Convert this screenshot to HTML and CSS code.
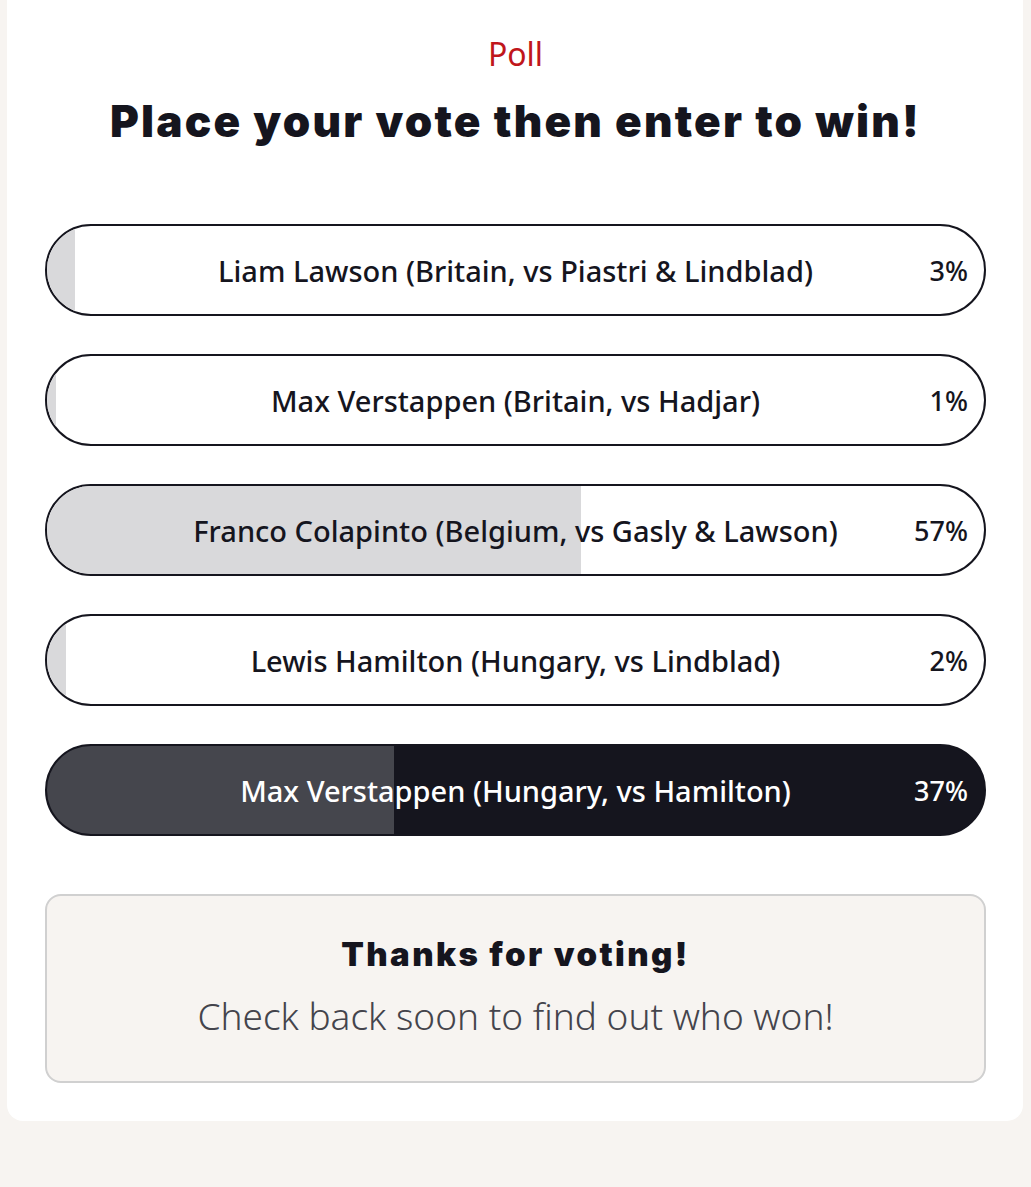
FILE: index.html
```html
<!DOCTYPE html>
<html lang="en">
<head>
  <title>Poll</title>
  <link rel="stylesheet" href="styles.css">
</head>

<body>
  <main class="card">
    <p class="eyebrow">Poll</p>
    <h1>Place your vote then enter to win!</h1>

    <ul class="options">
      <li class="option">
        <div class="fill" style="width: 3%"></div>
        <span class="label">Liam Lawson (Britain, vs Piastri &amp; Lindblad)</span>
        <span class="pct">3%</span>
      </li>
      <li class="option">
        <div class="fill" style="width: 1%"></div>
        <span class="label">Max Verstappen (Britain, vs Hadjar)</span>
        <span class="pct">1%</span>
      </li>
      <li class="option">
        <div class="fill" style="width: 57%"></div>
        <span class="label">Franco Colapinto (Belgium, vs Gasly &amp; Lawson)</span>
        <span class="pct">57%</span>
      </li>
      <li class="option">
        <div class="fill" style="width: 2%"></div>
        <span class="label">Lewis Hamilton (Hungary, vs Lindblad)</span>
        <span class="pct">2%</span>
      </li>
      <li class="option selected">
        <div class="fill" style="width: 37%"></div>
        <span class="label">Max Verstappen (Hungary, vs Hamilton)</span>
        <span class="pct">37%</span>
      </li>
    </ul>

    <section class="thanks">
      <h2>Thanks for voting!</h2>
      <p>Check back soon to find out who won!</p>
    </section>
  </main>
</body>
</html>
```

FILE: styles.css
```css
*,
*::before,
*::after {
  box-sizing: border-box;
}

html {
  font-family: "Noto Sans", sans-serif;
}
body {
  margin: 0;
  background: #f7f4f1;
  color: #15151e;
  min-height: 1187px;
}

.card {
  margin: -16px 8px 0 7px;
  padding: 50px 37px 38px 38px;
  background: #fff;
  border-radius: 16px;
}

.eyebrow {
  margin: 0;
  text-align: center;
  color: #c0161b;
  font-size: 32px;
  line-height: 40px;
}

h1 {
  margin: 20px 0 0;
  text-align: center;
  font-family: "Inter", sans-serif;
  font-weight: 900;
  font-size: 44px;
  line-height: 54px;
  letter-spacing: 2.2px;
}

.options {
  list-style: none;
  margin: 76px 0 0;
  padding: 0;
  display: flex;
  flex-direction: column;
  gap: 38px;
}

.option {
  position: relative;
  overflow: hidden;
  height: 92px;
  border: 2px solid #15151e;
  border-radius: 46px;
  background: #fff;
  display: flex;
  align-items: center;
  padding: 0 16px 0 30px;
  font-size: 29px;
  font-weight: 500;
}

.option .fill {
  position: absolute;
  left: 0;
  top: 0;
  bottom: 0;
  background: #d9d9db;
}

.option .label {
  position: relative;
  flex: 1;
  text-align: center;
  padding-left: 46px;
}

.option .pct {
  position: relative;
  min-width: 60px;
  font-size: 27px;
  text-align: right;
}

.option.selected {
  background: #15151e;
  color: #fff;
}
.option.selected .fill {
  background: #45464d;
}

.thanks {
  margin-top: 58px;
  padding: 36px 20px 41px;
  background: #f7f4f1;
  border: 2px solid #d0d0d0;
  border-radius: 16px;
  text-align: center;
}

.thanks h2 {
  margin: 0;
  font-family: "Inter", sans-serif;
  font-weight: 900;
  font-size: 33px;
  line-height: 44px;
  letter-spacing: 2.4px;
}

.thanks p {
  margin: 16px 0 0;
  color: #44444c;
  font-size: 37px;
  font-weight: 300;
  line-height: 48px;
}
```
